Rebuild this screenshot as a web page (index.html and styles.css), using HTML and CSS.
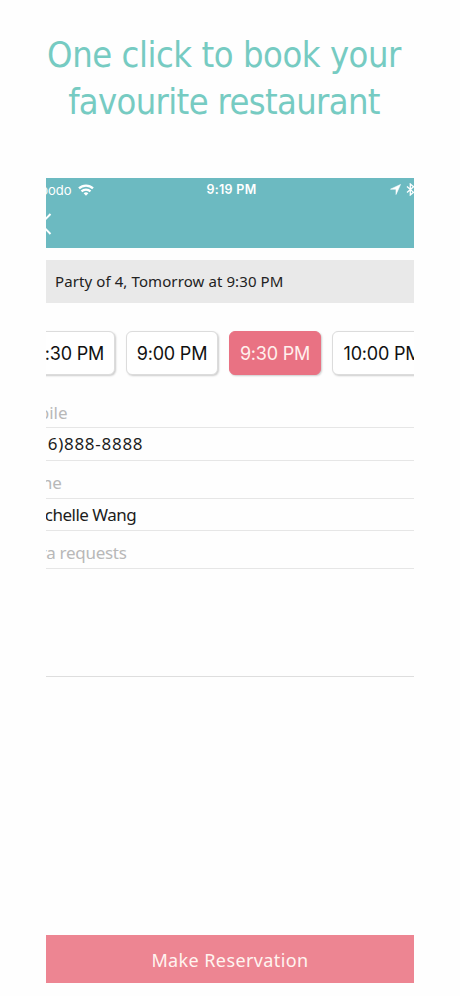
FILE: index.html
```html
<!DOCTYPE html>
<html lang="en">
<head>
    <meta charset="UTF-8">
    <meta name="viewport" content="width=device-width, initial-scale=1.0">
    <title>Make Reservation</title>
    <link rel="stylesheet" href="styles.css">
</head>
<body>
    <h1><span class="line-one">One click to book your</span><span class="line-two">favourite restaurant</span></h1>

    <main class="phone">
        <header class="app-header">
            <div class="status-bar">
                <div class="carrier">
                    <span>Koodo</span>
                    <svg width="16" height="12" viewBox="0 0 16 12" fill="none" stroke="#fff" stroke-width="2.2">
                        <path d="M1 4.4a10 10 0 0 1 14 0M3.5 7.4a6.4 6.4 0 0 1 9 0"/>
                        <path d="M8 11.7 5.6 9.2a3.6 3.6 0 0 1 4.8 0z" fill="#fff" stroke="none"/>
                    </svg>
                </div>
                <span class="clock">9:19 PM</span>
                <div class="indicators">
                    <svg width="11" height="11" viewBox="0 0 11 11"><path d="M10.5.5 6 10.5V5.2H.5z" fill="#fff" stroke="#fff" stroke-width=".6"/></svg>
                    <svg width="9" height="13" viewBox="0 0 9 13" fill="none" stroke="#fff" stroke-width="1.3"><path d="m1 3.5 6.5 5.8L4.3 12V1l3.2 2.7L1 9.5"/></svg>
                </div>
            </div>
            <svg class="back" width="13" height="22" viewBox="0 0 13 22" fill="none" stroke="#fff" stroke-width="2"><path d="M11.5 1 1.8 11l9.7 10"/></svg>
        </header>

        <div class="summary">Party of 4, Tomorrow at 9:30 PM</div>

        <div class="times">
            <button class="time">8:30 PM</button>
            <button class="time">9:00 PM</button>
            <button class="time selected">9:30 PM</button>
            <button class="time wide">10:00 PM</button>
        </div>

        <form class="details">
            <label class="mobile-label">Mobile</label>
            <div class="value mobile">(416)888-8888</div>
            <label class="name-label">Name</label>
            <div class="value name">Michelle Wang</div>
            <label class="requests-label">Extra requests</label>
            <div class="requests"></div>
        </form>

        <button class="reserve">Make Reservation</button>
    </main>
</body>
</html>
```
FILE: styles.css
```css
* {
    box-sizing: border-box;
}
body {
    margin: 0;
    height: 996px;
    background-color: #fefefe;
    font-family: "Noto Sans", sans-serif;
    overflow: hidden;
}
h1 {
    margin: 0;
    height: 178px;
    padding: 31px 12px 0 0;
    font-family: "DejaVu Sans Condensed", "DejaVu Sans", sans-serif;
    font-stretch: condensed;
    font-size: 36px;
    font-weight: 400;
    line-height: 47px;
    text-align: center;
    color: #76cbc2;
    white-space: nowrap;
}
h1 span {
    display: block;
}
.line-one {
    letter-spacing: -0.45px;
}
.line-two {
    letter-spacing: -0.65px;
}
.phone {
    width: 368px;
    height: 805px;
    margin-left: 46px;
    display: flex;
    flex-direction: column;
    overflow: hidden;
    white-space: nowrap;
}
.app-header {
    height: 70px;
    flex: none;
    background-color: #6cbac1;
    color: #fff;
}
.status-bar {
    height: 23px;
    margin: 0 -8px 0 -14px;
    display: flex;
    align-items: center;
    justify-content: space-between;
    font-family: Inter, sans-serif;
    font-size: 13px;
}
.carrier, .indicators {
    width: 80px;
    display: flex;
    align-items: center;
}
.carrier {
    gap: 6px;
}
.indicators {
    gap: 5px;
    justify-content: flex-end;
    padding-right: 7px;
}
.clock {
    font-weight: 600;
    font-size: 12.5px;
    letter-spacing: 0.3px;
    padding-left: 9px;
}
.back {
    display: block;
    margin: 12px 0 0 -7px;
}
.summary {
    flex: none;
    height: 43px;
    margin-top: 12px;
    padding-left: 9px;
    background-color: #e9e9e9;
    color: #222;
    font-size: 15px;
    line-height: 43px;
    letter-spacing: 0.1px;
}
.times {
    flex: none;
    display: flex;
    gap: 11px;
    margin: 28px 0 0 -23px;
}
.time {
    flex: none;
    width: 92px;
    height: 44px;
    padding: 0;
    border: 1px solid #dcdcdc;
    border-radius: 6px;
    box-shadow: 1px 1px 2px rgba(0, 0, 0, 0.2);
    background-color: #fff;
    color: #111;
    font-family: Inter, sans-serif;
    font-size: 18px;
    letter-spacing: -0.2px;
}
.time.selected {
    border-color: #e97283;
    background-color: #e97283;
    color: #fff0ed;
}
.time.wide {
    width: 101px;
}
.details {
    flex: none;
    margin-top: 24px;
    font-size: 17px;
}
.details label {
    display: block;
    height: 38px;
    padding-top: 7px;
    border-bottom: 1px solid #e6e6e6;
    line-height: 30px;
    color: #b8b8b8;
}
.value {
    height: 32px;
    border-bottom: 1px solid #e6e6e6;
    line-height: 32px;
    color: #1c1c1c;
}
.details .mobile-label {
    height: 29px;
    padding-top: 0;
    line-height: 28px;
}
.mobile-label {
    text-indent: -33px;
}
.name-label {
    text-indent: -32px;
}
.requests-label {
    text-indent: -30px;
    letter-spacing: -0.28px;
}
.mobile {
    height: 33px;
    text-indent: -25px;
    letter-spacing: 0.72px;
}
.name {
    text-indent: -20px;
    letter-spacing: -0.5px;
}
.requests {
    height: 108px;
    border-bottom: 1px solid #dedede;
}
.reserve {
    flex: none;
    height: 48px;
    padding-top: 3px;
    margin-top: auto;
    border: none;
    background-color: #ed8592;
    color: #fff4f0;
    font-family: "Noto Sans", sans-serif;
    font-size: 18px;
    letter-spacing: 0.4px;
}
```
